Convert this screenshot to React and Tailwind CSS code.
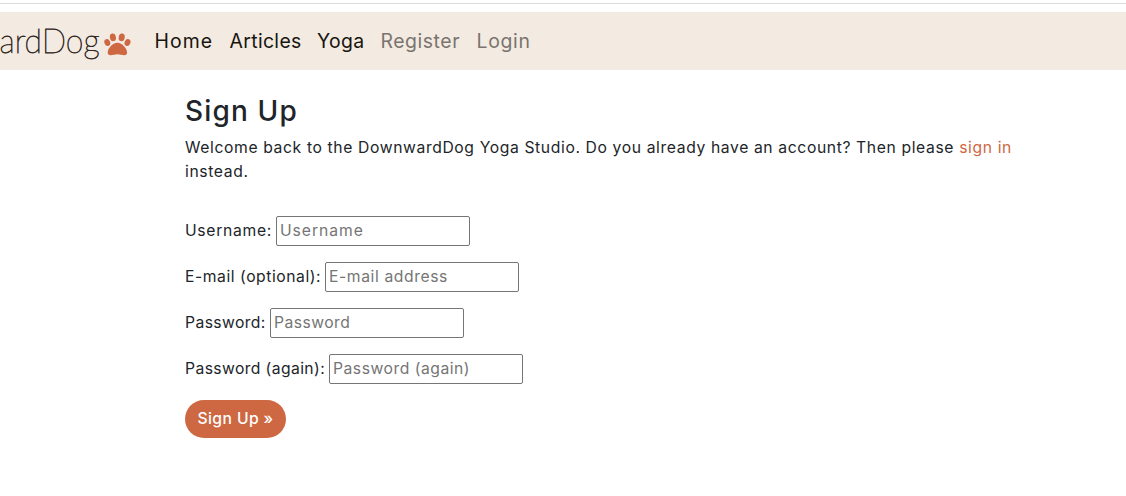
const links = [
  { label: 'Home', style: 'w-[75px] text-[#18150f] tracking-[1.1px]' },
  { label: 'Articles', style: 'w-[87.5px] text-[#18150f] tracking-[0.35px]' },
  { label: 'Yoga', style: 'w-[63.5px] text-[#18150f] tracking-[0.35px]' },
  { label: 'Register', style: 'w-[96px] text-[#79746f] tracking-[0.55px]' },
  { label: 'Login', style: 'text-[#79746f] tracking-[0.7px]' },
];

const fields = [
  { id: 'username', label: 'Username:', labelStyle: 'w-[91px] tracking-[0.7px]', inputStyle: 'tracking-[0.95px]', placeholder: 'Username', type: 'text' },
  { id: 'email', label: 'E-mail (optional):', labelStyle: 'w-[140px] tracking-[0.55px]', inputStyle: 'tracking-[0.6px]', placeholder: 'E-mail address', type: 'email' },
  { id: 'password', label: 'Password:', labelStyle: 'w-[85px] tracking-[0.4px]', inputStyle: 'tracking-[0.45px]', placeholder: 'Password', type: 'password' },
  { id: 'password2', label: 'Password (again):', labelStyle: 'w-[144px] tracking-[0.4px]', inputStyle: 'tracking-[0.52px]', placeholder: 'Password (again)', type: 'password' },
];

function Logo() {
  return (
    <svg className="block h-[58px] w-[154.5px] shrink-0" viewBox="0 0 154.5 58">
      <text x="-0.5" y="41" textLength="100" lengthAdjust="spacingAndGlyphs" className="fill-[#30271f] font-['Lato'] text-[33px] font-thin" stroke="#30271f" strokeWidth="0.8">ardDog</text>
      <g fill="#ce6842">
        <ellipse cx="107.3" cy="30.5" rx="2.8" ry="3.5" transform="rotate(-25 107.3 30.5)" />
        <ellipse cx="112.9" cy="25.3" rx="3" ry="3.9" transform="rotate(-12 112.9 25.3)" />
        <ellipse cx="121.7" cy="25.3" rx="3" ry="3.9" transform="rotate(12 121.7 25.3)" />
        <ellipse cx="127.5" cy="30.5" rx="2.8" ry="3.5" transform="rotate(25 127.5 30.5)" />
        <path d="M117.4 30.7C112.5 30.7 107.7 36.5 107.7 40.6C107.7 42.4 108.8 43.2 110.5 43.2C113 43.2 115 42.2 117.4 42.2C119.8 42.2 121.9 43.2 124.3 43.2C126 43.2 127.1 42.4 127.1 40.6C127.1 36.5 122.3 30.7 117.4 30.7Z" />
      </g>
    </svg>
  );
}

export default function App() {
  return (
    <div className="h-[496px] overflow-hidden bg-white pt-[3px] font-['Inter',sans-serif] text-[15.7px] leading-6 text-[#212529]">
      <div className="h-px bg-[#dcdcdc]" />
      <nav className="mt-2 flex h-[58px] items-center bg-[#f3eae1]">
        <Logo />
        {links.map((link) => (
          <a key={link.label} href="#" className={`whitespace-nowrap text-[19.4px] leading-[30px] ${link.style}`}>{link.label}</a>
        ))}
      </nav>
      <main className="ml-[185px] w-[840px] pt-6">
        <h1 className="mb-2 text-[28px] leading-[34px] font-medium tracking-[1.15px]">Sign Up</h1>
        <p className="whitespace-nowrap tracking-[0.62px]">
          Welcome back to the DownwardDog Yoga Studio. Do you already have an account? Then please{' '}
          <a href="#" className="text-[#ce6842]">sign in</a>
          <br />
          instead.
        </p>
        <form className="mt-8 flex flex-col items-start gap-4">
          {fields.map((field) => (
            <div key={field.id} className="flex h-[30px] items-center">
              <label htmlFor={field.id} className={`shrink-0 whitespace-nowrap ${field.labelStyle}`}>{field.label}</label>
              <input id={field.id} type={field.type} placeholder={field.placeholder} className={`h-[30px] w-[194px] rounded-[2px] border border-[#767676] bg-white px-[3px] pb-px placeholder:text-[#757575] ${field.inputStyle}`} />
            </div>
          ))}
          <button type="button" className="h-[38px] w-[101px] whitespace-nowrap rounded-full bg-[#ce6842] font-medium tracking-[0.4px] text-white">Sign Up »</button>
        </form>
      </main>
    </div>
  );
}
